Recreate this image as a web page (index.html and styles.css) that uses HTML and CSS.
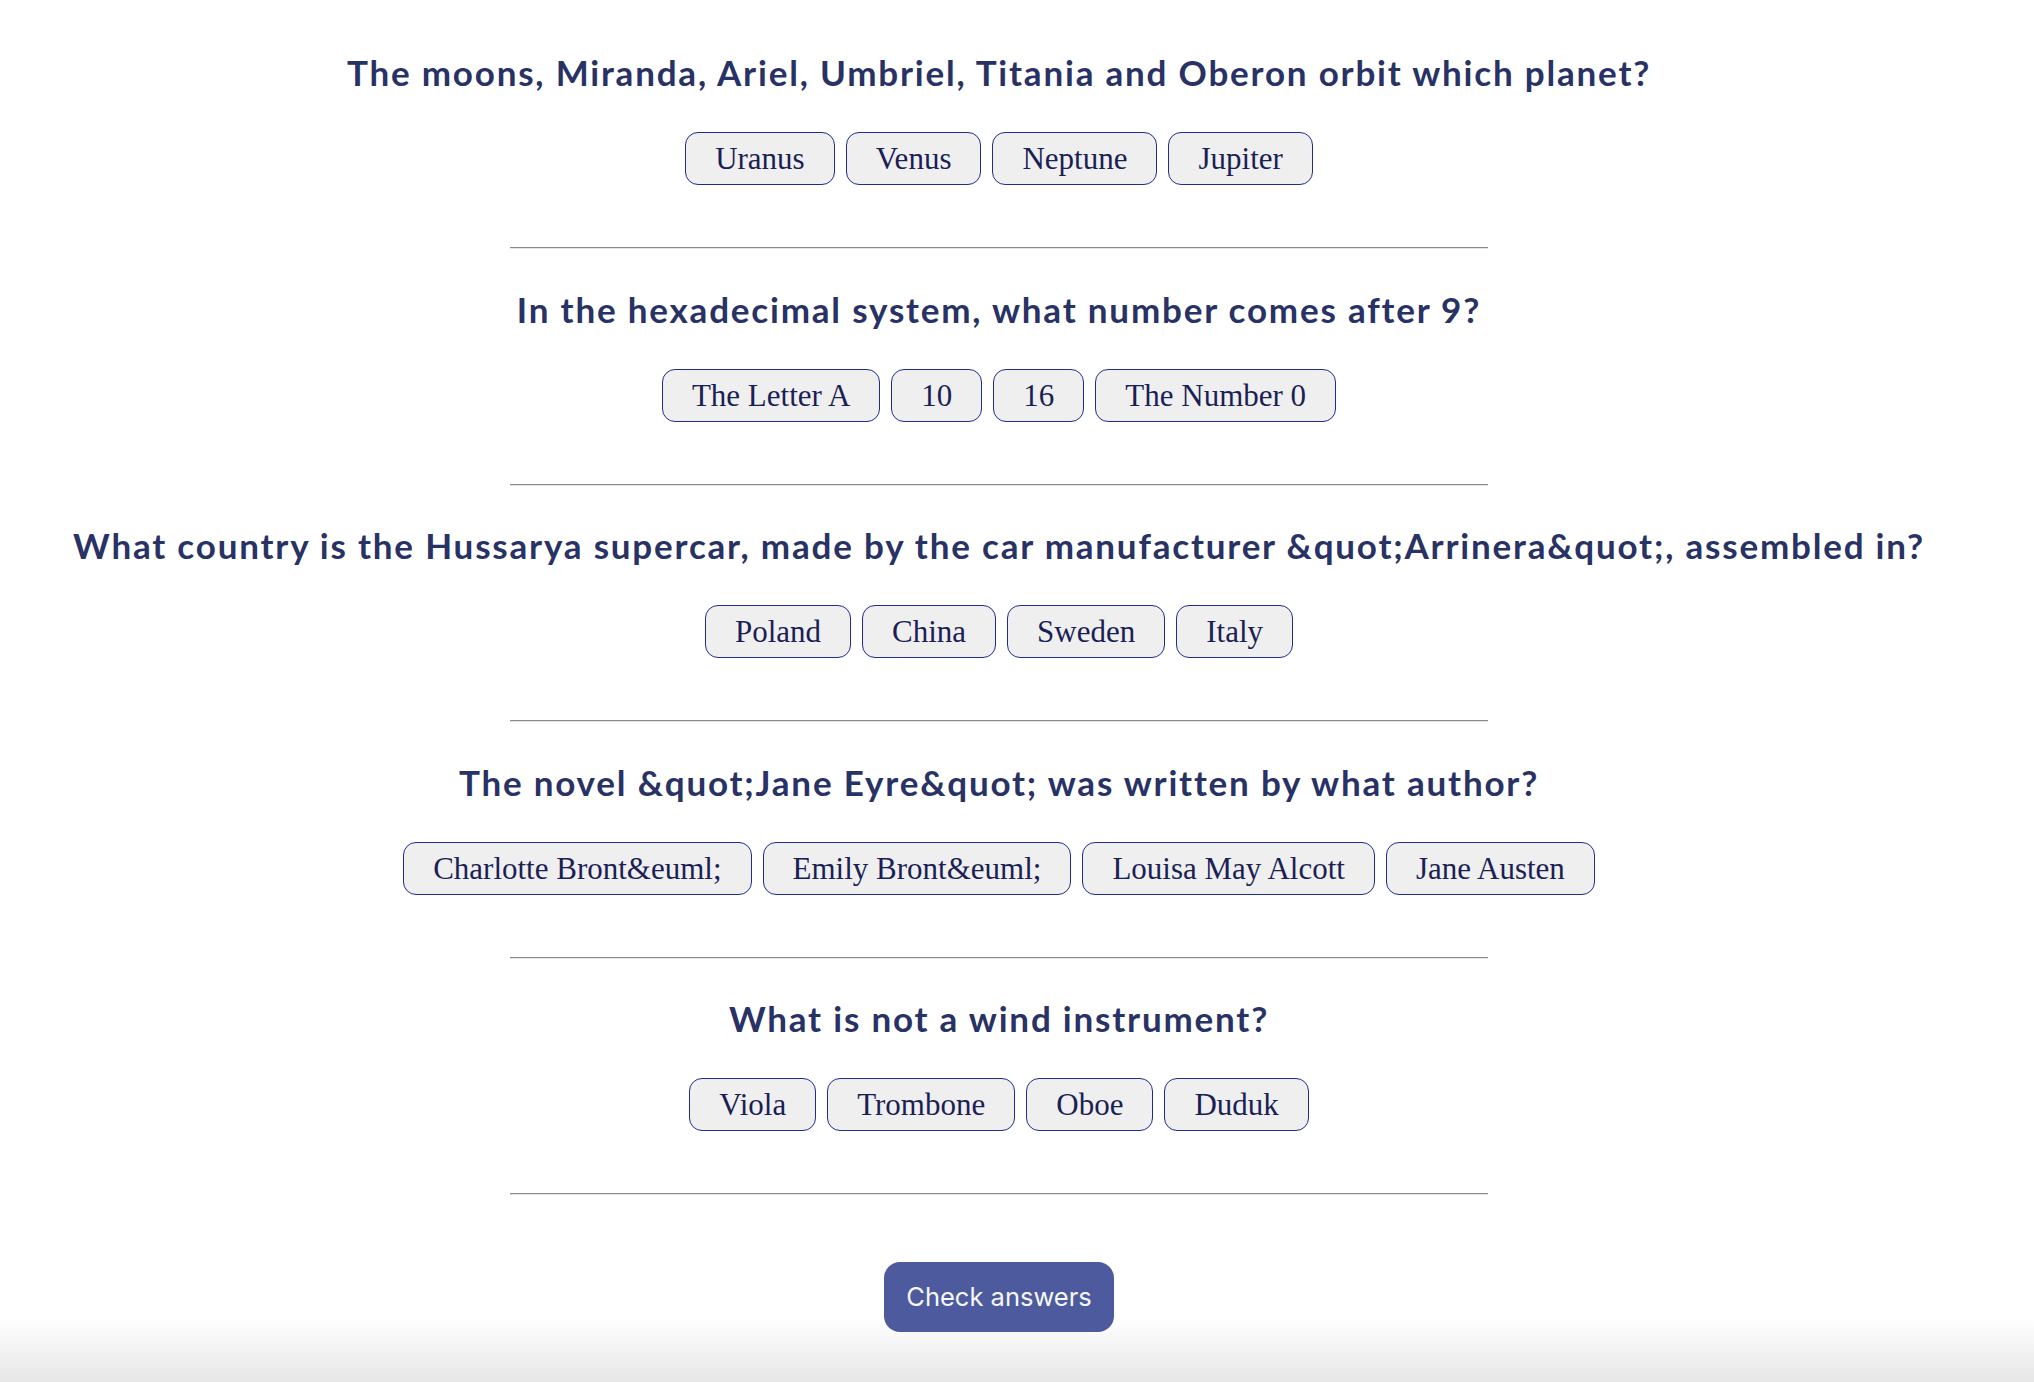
FILE: index.html
```html
<!DOCTYPE html>
<html lang="en">
<head>
<meta charset="utf-8">
<title>Quizzical</title>
<link rel="stylesheet" href="styles.css">
</head>
<body>
<main class="quiz">
  <section class="question">
    <h2 class="question-title">The moons, Miranda, Ariel, Umbriel, Titania and Oberon orbit which planet?</h2>
    <div class="answers">
      <button class="answer">Uranus</button>
      <button class="answer">Venus</button>
      <button class="answer">Neptune</button>
      <button class="answer">Jupiter</button>
    </div>
    <hr class="divider">
  </section>
  <section class="question">
    <h2 class="question-title">In the hexadecimal system, what number comes after 9?</h2>
    <div class="answers">
      <button class="answer">The Letter A</button>
      <button class="answer">10</button>
      <button class="answer">16</button>
      <button class="answer">The Number 0</button>
    </div>
    <hr class="divider">
  </section>
  <section class="question">
    <h2 class="question-title">What country is the Hussarya supercar, made by the car manufacturer &amp;quot;Arrinera&amp;quot;, assembled in?</h2>
    <div class="answers">
      <button class="answer">Poland</button>
      <button class="answer">China</button>
      <button class="answer">Sweden</button>
      <button class="answer">Italy</button>
    </div>
    <hr class="divider">
  </section>
  <section class="question">
    <h2 class="question-title">The novel &amp;quot;Jane Eyre&amp;quot; was written by what author?</h2>
    <div class="answers">
      <button class="answer">Charlotte Bront&amp;euml;</button>
      <button class="answer">Emily Bront&amp;euml;</button>
      <button class="answer">Louisa May Alcott</button>
      <button class="answer">Jane Austen</button>
    </div>
    <hr class="divider">
  </section>
  <section class="question">
    <h2 class="question-title">What is not a wind instrument?</h2>
    <div class="answers">
      <button class="answer">Viola</button>
      <button class="answer">Trombone</button>
      <button class="answer">Oboe</button>
      <button class="answer">Duduk</button>
    </div>
    <hr class="divider">
  </section>
  <div class="actions">
    <button class="check-btn">Check answers</button>
  </div>
</main>
</body>
</html>
```
FILE: styles.css
```css
html, body {
  margin: 0;
  padding: 0;
}

body {
  min-height: 100vh;
  background: linear-gradient(to bottom, #ffffff 0, #ffffff calc(100% - 64px), #e6e6e6 100%);
}

.quiz {
  width: 1998px;
  padding-top: 51px;
  display: flex;
  flex-direction: column;
  align-items: center;
}

.question {
  width: 100%;
  display: flex;
  flex-direction: column;
  align-items: center;
  padding-bottom: 38.5px;
}

.question-title {
  margin: 0 0 39px;
  font-family: "Lato", "Open Sans", sans-serif;
  font-weight: 700;
  font-size: 35px;
  line-height: 42px;
  letter-spacing: 1.8px;
  color: #293264;
  text-align: center;
}

.answers {
  display: flex;
  justify-content: center;
  gap: 11px;
}

.answer {
  font-family: "Liberation Serif", "Times New Roman", serif;
  font-size: 31px;
  line-height: 35px;
  padding: 8px 29px;
  border: 1px solid #1f2d8f;
  border-radius: 13px;
  background: #efefef;
  color: #1b1f55;
}

.divider {
  width: 978px;
  height: 0;
  margin: 62px 0 0;
  border: none;
  border-top: 1px solid #8a8a8a;
  border-bottom: 1px solid #e4e4e4;
}

.actions {
  padding-top: 28.5px;
  display: flex;
  justify-content: center;
}

.check-btn {
  font-family: "Inter", sans-serif;
  font-size: 25.5px;
  line-height: 30px;
  padding: 20px 22px;
  border: none;
  border-radius: 16px;
  background: #4d5b9e;
  color: #f5f7fb;
}
```
